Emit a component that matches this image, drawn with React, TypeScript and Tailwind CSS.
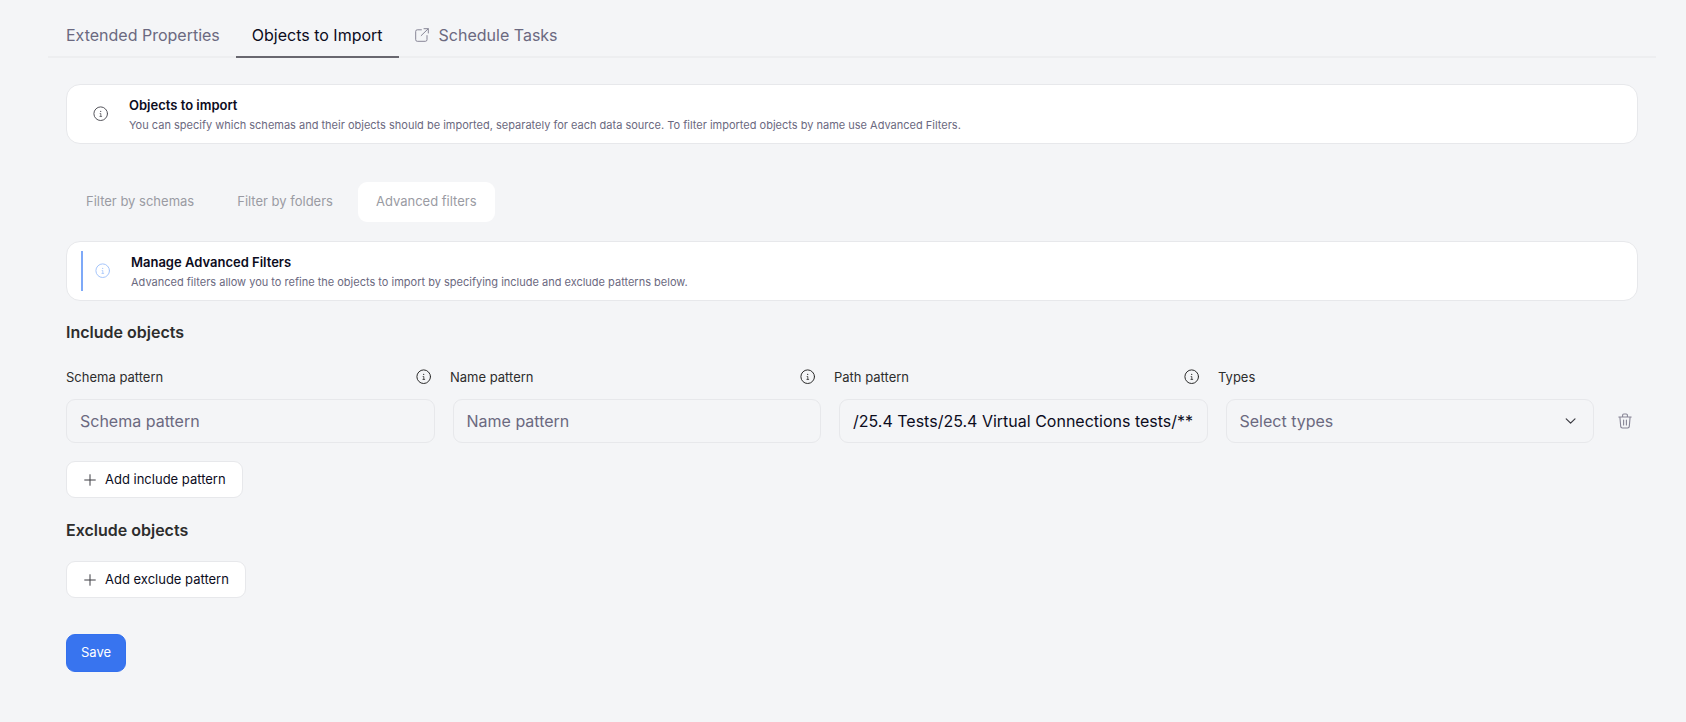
import { useState } from "react";

const MUTED_CLASS = "text-[#6b6980]";

function InfoIcon({ className = "" }: { className?: string }) {
  return (
    <svg
      width="16"
      height="16"
      viewBox="0 0 16 16"
      fill="none"
      stroke="currentColor"
      strokeLinecap="round"
      strokeLinejoin="round"
      className={`shrink-0 ${className}`}
      aria-hidden="true"
    >
      <circle cx="7.7" cy="7.7" r="6.8" strokeWidth="1" />
      <path d="M7.1 7.5h.7v2.8M6.9 10.4h1.8" strokeWidth="0.8" />
      <circle cx="7.7" cy="5.4" r="0.6" fill="currentColor" stroke="none" />
    </svg>
  );
}

function ExternalIcon() {
  return (
    <svg
      width="14"
      height="14"
      viewBox="0 0 14 14"
      fill="none"
      stroke="currentColor"
      strokeLinecap="round"
      strokeLinejoin="round"
      className="shrink-0 text-[#878596]"
      aria-hidden="true"
    >
      <path d="M6.4 1.8H2.3A1.6 1.6 0 0 0 .7 3.4v8.3a1.6 1.6 0 0 0 1.6 1.6h8.1a1.6 1.6 0 0 0 1.6-1.6V7.6M6.2 7.6 13.2.8M9 .7h4.3V5" />
    </svg>
  );
}

function PlusIcon() {
  return (
    <svg width="12" height="12" viewBox="0 0 12 12" fill="none" stroke="currentColor" strokeLinecap="round" className="shrink-0 text-[#3c3c43]" aria-hidden="true">
      <path d="M6 .7v10.6M.7 6h10.6" />
    </svg>
  );
}

function TrashIcon() {
  return (
    <svg
      width="14"
      height="16"
      viewBox="0 0 14 16"
      fill="none"
      stroke="currentColor"
      strokeWidth="1.1"
      strokeLinecap="round"
      strokeLinejoin="round"
      aria-hidden="true"
    >
      <path d="M.8 4h12.4M4.6 4V2.2A1.2 1.2 0 0 1 5.8 1h2.4a1.2 1.2 0 0 1 1.2 1.2V4M1.9 4l.8 9.4A1.7 1.7 0 0 0 4.4 15h5.2a1.7 1.7 0 0 0 1.7-1.6L12.1 4M5.6 7v5M8.4 7v5" />
    </svg>
  );
}

function Notice({ title, text, accent = false }: { title: string; text: string; accent?: boolean }) {
  return (
    <section className="flex h-[60px] items-center rounded-[14px] border border-[#e7e8eb] bg-white px-[14px]">
      {accent && <span className="h-10 w-[2px] bg-[#7ea9f8]" />}
      <InfoIcon className={accent ? "mr-5 ml-3 text-[#a5c5fb]" : "mr-5 ml-3 text-[#55555c]"} />
      <div className="pt-[2px]">
        <h2 className="text-[13px] leading-5 font-semibold text-[#0c0c1d]">{title}</h2>
        <p className={`text-[11px] leading-5 ${MUTED_CLASS}`}>{text}</p>
      </div>
    </section>
  );
}

function AddButton({ label }: { label: string }) {
  return (
    <button
      type="button"
      className="flex h-[37px] items-center gap-[9px] rounded-[9px] border border-[#e7e8eb] bg-white pr-4 pl-[17px] text-[13px] text-[#0c0c1d]"
    >
      <PlusIcon />
      {label}
    </button>
  );
}

const fields = [
  { id: "schema", label: "Schema pattern", info: true },
  { id: "name", label: "Name pattern", info: true },
  { id: "path", label: "Path pattern", info: true },
  { id: "types", label: "Types", info: false },
];

const filters = ["Filter by schemas", "Filter by folders", "Advanced filters"];

const fieldClass =
  "h-11 w-full rounded-[9px] border border-[#e7e8eb] bg-transparent px-[13px] text-[16px] text-[#0c0c1d] outline-none placeholder:text-[#6b6980]";

export default function App() {
  const [filter, setFilter] = useState(filters[2]);
  const [path, setPath] = useState("/25.4 Tests/25.4 Virtual Connections tests/**");

  return (
    <div className="min-h-screen bg-[#f4f5f7] pr-[30px] pl-12 font-['Inter',sans-serif]">
      <nav className={`flex h-[58px] items-end border-b-2 border-[#edeef0] pl-[2px] text-[16px] ${MUTED_CLASS}`}>
        <a href="#properties" className="flex h-[42px] items-center px-4">
          Extended Properties
        </a>
        <a href="#objects" aria-current="page" className="-mb-[2px] flex h-11 items-center border-b-2 border-[#68676f] px-4 text-[#0c0c1d]">
          Objects to Import
        </a>
        <a href="#tasks" className="flex h-[42px] items-center gap-[10px] px-4">
          <ExternalIcon />
          Schedule Tasks
        </a>
      </nav>

      <main className="flex flex-col items-stretch px-[18px] pt-[26px] pb-12">
        <Notice
          title="Objects to import"
          text="You can specify which schemas and their objects should be imported, separately for each data source. To filter imported objects by name use Advanced Filters."
        />

        <div className="mt-[38px] mb-[19px] flex gap-[7px] pl-[2px] text-[13px] text-[#9a9ba3]">
          {filters.map((name) => (
            <button
              key={name}
              type="button"
              onClick={() => setFilter(name)}
              className={`h-10 rounded-[9px] px-[18px] ${name === filter ? "bg-white" : ""}`}
            >
              {name}
            </button>
          ))}
        </div>

        <Notice
          accent
          title="Manage Advanced Filters"
          text="Advanced filters allow you to refine the objects to import by specifying include and exclude patterns below."
        />

        <h3 className="mt-[19px] text-[16px] leading-6 font-semibold text-[#2d2d2d]">Include objects</h3>

        <div className="mt-[23px] grid grid-cols-4 gap-[18px] pr-[54px] text-[13px] leading-5 text-[#2d2d2d]">
          {fields.map((field) => (
            <div key={field.id} className="flex items-center justify-between">
              <label htmlFor={field.id}>{field.label}</label>
              {field.info && <InfoIcon />}
            </div>
          ))}
        </div>

        <div className="mt-3 flex items-center">
          <div className="grid flex-1 grid-cols-4 gap-[18px]">
            <input id="schema" type="text" placeholder="Schema pattern" className={fieldClass} />
            <input id="name" type="text" placeholder="Name pattern" className={fieldClass} />
            <input id="path" type="text" value={path} onChange={(e) => setPath(e.target.value)} className={fieldClass} />
            <div className="relative">
              <select id="types" defaultValue="" className={`${fieldClass} appearance-none text-[#6b6980]!`}>
                <option value="">Select types</option>
              </select>
              <svg
                width="12"
                height="8"
                viewBox="0 0 12 8"
                fill="none"
                stroke="#3c3c43"
                strokeWidth="1.2"
                strokeLinecap="round"
                strokeLinejoin="round"
                className="pointer-events-none absolute top-[18px] right-[17px]"
                aria-hidden="true"
              >
                <path d="M1.2 1.8 5.6 6.2 10 1.8" />
              </svg>
            </div>
          </div>
          <button type="button" aria-label="Delete pattern" className="flex h-11 w-11 items-center justify-center pl-[18px] text-[#878596]">
            <TrashIcon />
          </button>
        </div>

        <div className="mt-[18px] flex">
          <AddButton label="Add include pattern" />
        </div>

        <h3 className="mt-5 text-[16px] leading-6 font-semibold text-[#2d2d2d]">Exclude objects</h3>

        <div className="mt-[19px] flex">
          <AddButton label="Add exclude pattern" />
        </div>

        <div className="mt-9 flex">
          <button type="button" className="h-[38px] rounded-[9px] border border-[#3370ee] bg-[#3874ef] px-[14px] text-[13px] text-white">
            Save
          </button>
        </div>
      </main>
    </div>
  );
}
